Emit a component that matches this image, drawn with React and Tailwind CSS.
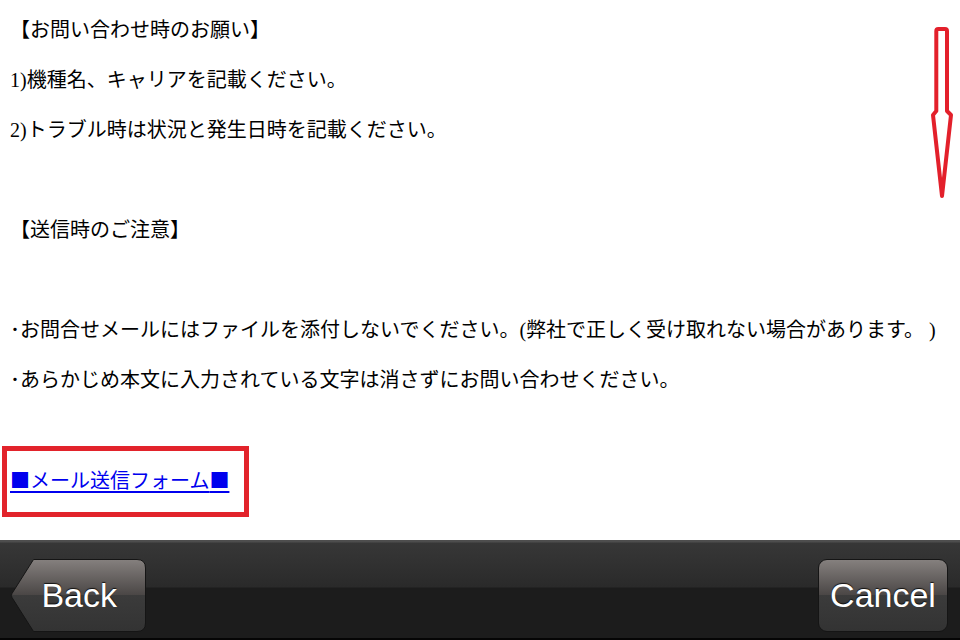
import React from 'react';

const FONT = '"Liberation Serif", "Noto Sans CJK JP", serif';
const CJK = '"Noto Sans CJK JP", sans-serif';

const Row = ({ children, className = '' }) => (
  <div className={`h-[50px] flex items-center whitespace-pre ${className}`}>{children}</div>
);

const ScrollArrow = () => (
  <svg className="absolute left-0 top-0 pointer-events-none" width="960" height="540" viewBox="0 0 960 540">
    <path
      d="M936.3,31 Q936.3,29 938.3,29 H945 Q947,29 947,31 V111 L951,115 L942,196 L933,115 L936.3,111 Z"
      fill="none"
      stroke="#e3202b"
      strokeWidth="4"
      strokeLinejoin="round"
    />
  </svg>
);

const BackButton = () => (
  <button type="button" className="relative w-[136px] h-[73px] flex items-center justify-end pr-[29px]">
    <svg className="absolute inset-0" width="136" height="73" viewBox="0 0 136 73">
      <defs>
        <linearGradient id="backFill" x1="0" y1="0" x2="0" y2="1">
          <stop offset="0" stopColor="#85807e" />
          <stop offset="0.49" stopColor="#4b4746" />
          <stop offset="0.5" stopColor="#3b3b3b" />
          <stop offset="1" stopColor="#333333" />
        </linearGradient>
      </defs>
      <path
        d="M23.5,0.5 H127 Q135.5,0.5 135.5,9 V64 Q135.5,72.5 127,72.5 H23.5 L2,38.5 Q0.8,36.5 2,34.5 Z"
        fill="url(#backFill)"
        stroke="#151515"
        strokeWidth="1"
      />
    </svg>
    <span className="relative text-[34px] text-white font-['Liberation_Sans',Arial,sans-serif] [text-shadow:0_-1px_1px_rgba(0,0,0,0.8)]">
      Back
    </span>
  </button>
);

const CancelButton = () => (
  <button
    type="button"
    className="w-[130px] h-[73px] rounded-[9px] border border-[#151515] bg-[linear-gradient(to_bottom,#85807e_0%,#4b4746_49%,#3b3b3b_50%,#333333_100%)] flex items-center justify-center"
  >
    <span className="text-[34px] text-white font-['Liberation_Sans',Arial,sans-serif] [text-shadow:0_-1px_1px_rgba(0,0,0,0.8)]">
      Cancel
    </span>
  </button>
);

export default function App() {
  return (
    <div className="w-[960px] h-[640px] flex flex-col bg-white overflow-hidden">
      {/* content */}
      <div className="relative h-[540px] pt-[5px] pl-[10px] text-black text-[20px]" style={{ fontFamily: FONT }}>
        <Row>【お問い合わせ時のお願い】</Row>
        <Row>1)機種名、キャリアを記載ください。</Row>
        <Row>2)トラブル時は状況と発生日時を記載ください。</Row>
        <Row className="mt-[50px]">【送信時のご注意】</Row>
        <Row className="mt-[50px]">･お問合せメールにはファイルを添付しないでください。(弊社で正しく受け取れない場合があります。 )</Row>
        <Row>･あらかじめ本文に入力されている文字は消さずにお問い合わせください。</Row>
        <Row className="mt-[50px] relative">
          <a href="#" className="text-[#0000ee] underline underline-offset-[3px]">
            <span style={{ fontFamily: CJK }}>■</span>メール送信フォーム<span style={{ fontFamily: CJK }}>■</span>
          </a>
          <div className="absolute left-[-8px] top-[-9px] w-[247px] h-[71px] border-[5px] border-[#e2232b]" />
        </Row>
        <ScrollArrow />
      </div>

      {/* toolbar */}
      <div className="h-[100px] flex items-center justify-between pt-[10px] pl-[10px] pr-[12px] bg-[linear-gradient(to_bottom,#4e4e4e_0px,#4e4e4e_2px,#373737_3px,#2a2a2a_47px,#1c1c1c_48px,#1c1c1c_98px,#050505_98px)]">
        <BackButton />
        <CancelButton />
      </div>
    </div>
  );
}
